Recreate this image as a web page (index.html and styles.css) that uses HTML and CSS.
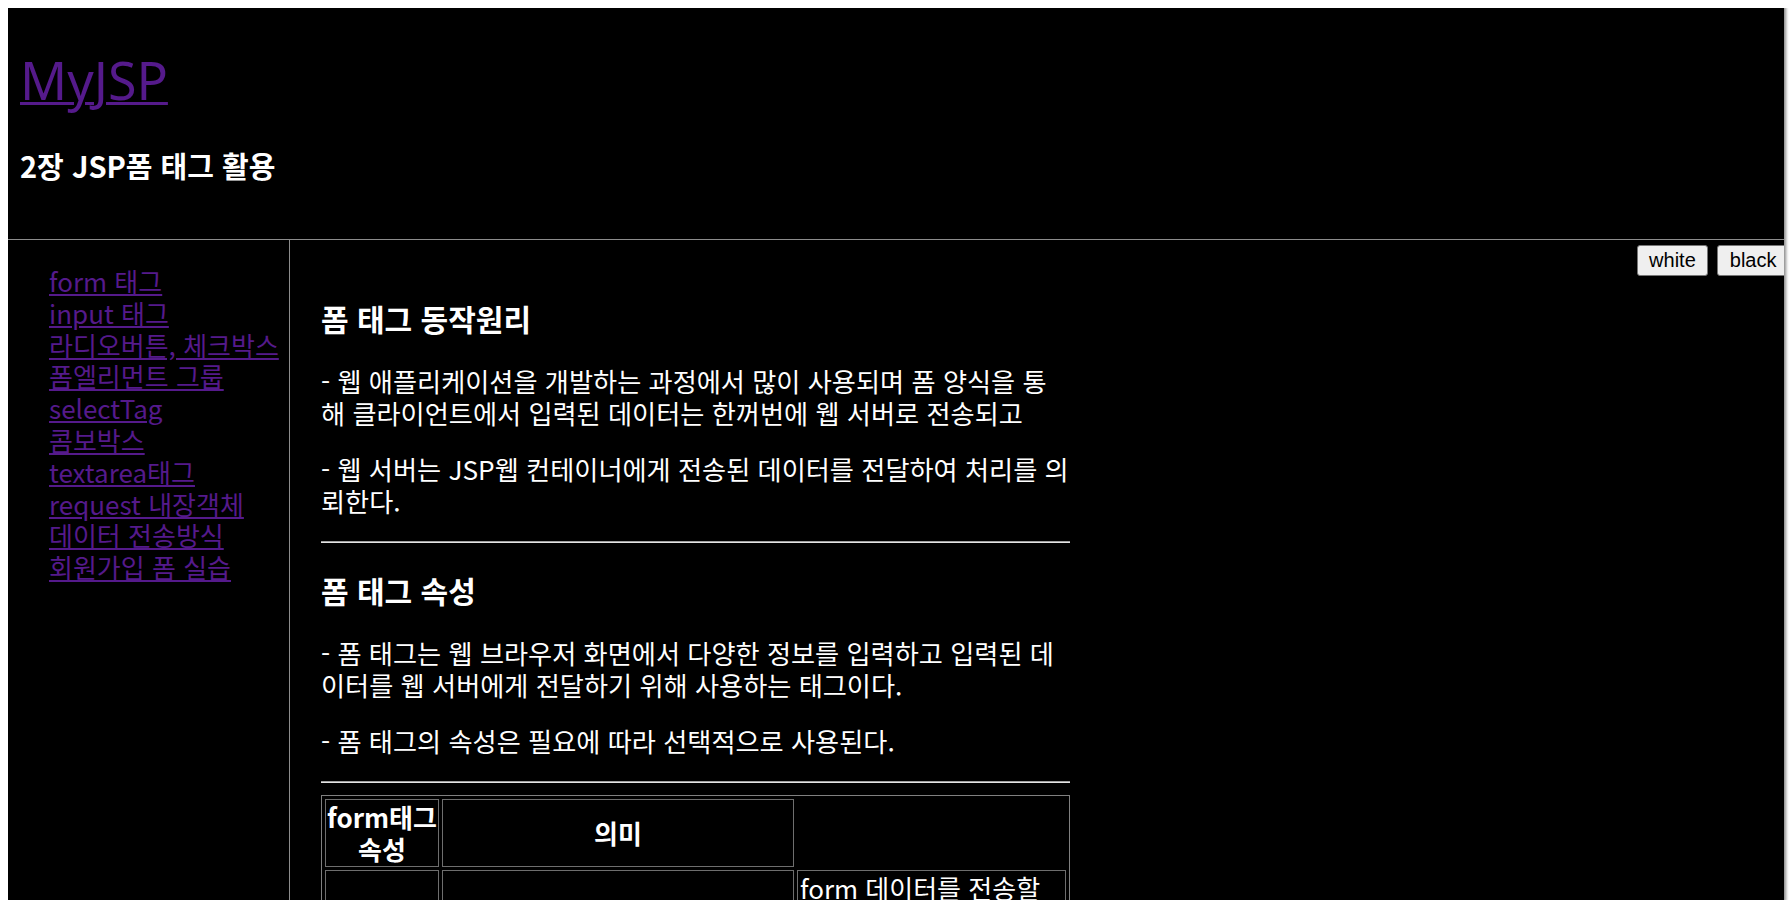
FILE: index.html
```html
<!DOCTYPE html>
<html lang="ko">
<head>
    <meta charset="UTF-8">
    <meta name="viewport" content="width=device-width, initial-scale=1.0">
    <title>MyJSP - 2장 JSP폼 태그 활용</title>
    <link rel="stylesheet" href="styles.css">
</head>
<body>

<div class="frame">
    <header class="site-header">
        <h1><a href="#">MyJSP</a></h1>
        <h3>2장 JSP폼 태그 활용</h3>
    </header>

    <div class="layout">
        <nav class="side-nav">
            <ul>
                <li><a href="#">form 태그</a></li>
                <li><a href="#">input 태그</a></li>
                <li><a href="#">라디오버튼, 체크박스</a></li>
                <li><a href="#">폼엘리먼트 그룹</a></li>
                <li><a href="#">selectTag</a></li>
                <li><a href="#">콤보박스</a></li>
                <li><a href="#">textarea태그</a></li>
                <li><a href="#">request 내장객체</a></li>
                <li><a href="#">데이터 전송방식</a></li>
                <li><a href="#">회원가입 폼 실습</a></li>
            </ul>
        </nav>

        <main class="content">
            <div class="theme-bar">
                <button type="button">white</button>
                <button type="button">black</button>
            </div>

            <article class="article">
                <h3>폼 태그 동작원리</h3>
                <p>- 웹 애플리케이션을 개발하는 과정에서 많이 사용되며 폼 양식을 통해 클라이언트에서 입력된 데이터는 한꺼번에 웹 서버로 전송되고</p>
                <p>- 웹 서버는 JSP웹 컨테이너에게 전송된 데이터를 전달하여 처리를 의뢰한다.</p>
                <hr>
                <h3>폼 태그 속성</h3>
                <p>- 폼 태그는 웹 브라우저 화면에서 다양한 정보를 입력하고 입력된 데이터를 웹 서버에게 전달하기 위해 사용하는 태그이다.</p>
                <p>- 폼 태그의 속성은 필요에 따라 선택적으로 사용된다.</p>
                <hr>

                <table class="attr-table">
                    <tr>
                        <th class="col-name">form태그 속성</th>
                        <th class="col-mean">의미</th>
                    </tr>
                    <tr>
                        <td class="col-name"></td>
                        <td class="col-mean"></td>
                        <td class="col-desc">form 데이터를 전송할 웹 페이지의 URL을 지정한다. 생략하면 현재 페이지로 form 데이터를 전송한다.</td>
                    </tr>
                </table>
            </article>
        </main>
    </div>
</div>

</body>
</html>
```

FILE: styles.css
```css
body {
    margin: 8px 0 0 8px;
    background-color: #ffffff;
    font-family: "Noto Sans CJK KR", sans-serif;
    font-size: 26px;
    color: #ffffff;
}

a {
    color: #551A8B;
}

/* 스크린샷 프레임 */
.frame {
    width: 1776px;
    height: 892px;
    background-color: #000000;
    overflow: hidden;
    box-shadow: 0 0 3px 2px #8a8a8a;
}

.site-header {
    padding: 0 12px;
    border-bottom: 1px solid #8c8c8c;
}

.site-header h1 {
    margin: 37px 0 0;
    font-family: "Noto Sans", sans-serif;
    font-size: 52px;
    font-weight: normal;
    line-height: 70px;
}

.site-header h1 a {
    text-decoration-thickness: 3px;
}

.site-header h3 {
    margin: 32px 0 0;
    padding-bottom: 55px;
    font-size: 29px;
    line-height: 37px;
}

.layout {
    display: flex;
}

.side-nav {
    width: 282px;
    min-height: 700px;
    box-sizing: border-box;
    border-right: 1px solid #8c8c8c;
}

.side-nav ul {
    list-style: none;
    margin: 25px 0 0;
    padding-left: 41px;
}

.side-nav li {
    line-height: 31.8px;
}

.content {
    flex: 1;
    padding-left: 31px;
}

.theme-bar {
    display: flex;
    justify-content: flex-end;
    gap: 9px;
    margin-top: 5px;
    margin-right: -5px;
}

.theme-bar button {
    height: 31px;
    box-sizing: border-box;
    font-family: "Liberation Sans", Arial, sans-serif;
    font-size: 20px;
    line-height: 23px;
    padding: 2px 11.5px;
    color: #000000;
    background-color: #efefef;
    border: 1px solid #767676;
    border-radius: 3px;
}

.article {
    width: 749px;
}

.article h3 {
    margin: 24px 0 28px;
    font-size: 30px;
    line-height: 37px;
}

.article hr + h3 {
    margin-top: 29px;
}

.article p {
    margin: 24px 0;
    font-size: 26.2px;
    line-height: 32px;
}

.article hr {
    margin: 12px 0;
    border: none;
    border-top: 1px solid #a0a0a0;
    border-bottom: 1px solid #e4e4e4;
}

.attr-table {
    width: 749px;
    border: 1px solid #808080;
    border-spacing: 3px;
    table-layout: fixed;
}

.attr-table th,
.attr-table td {
    border: 1px solid #6e6e6e;
    padding: 1px 2px;
    line-height: 32px;
}

.attr-table th {
    word-break: keep-all;
}

.attr-table td {
    vertical-align: middle;
}

.attr-table .col-name {
    width: 112px;
    padding: 1px 0;
    text-align: center;
}

.attr-table .col-mean {
    width: 346px;
    text-align: center;
}

.attr-table .col-desc {
    vertical-align: top;
}
```
